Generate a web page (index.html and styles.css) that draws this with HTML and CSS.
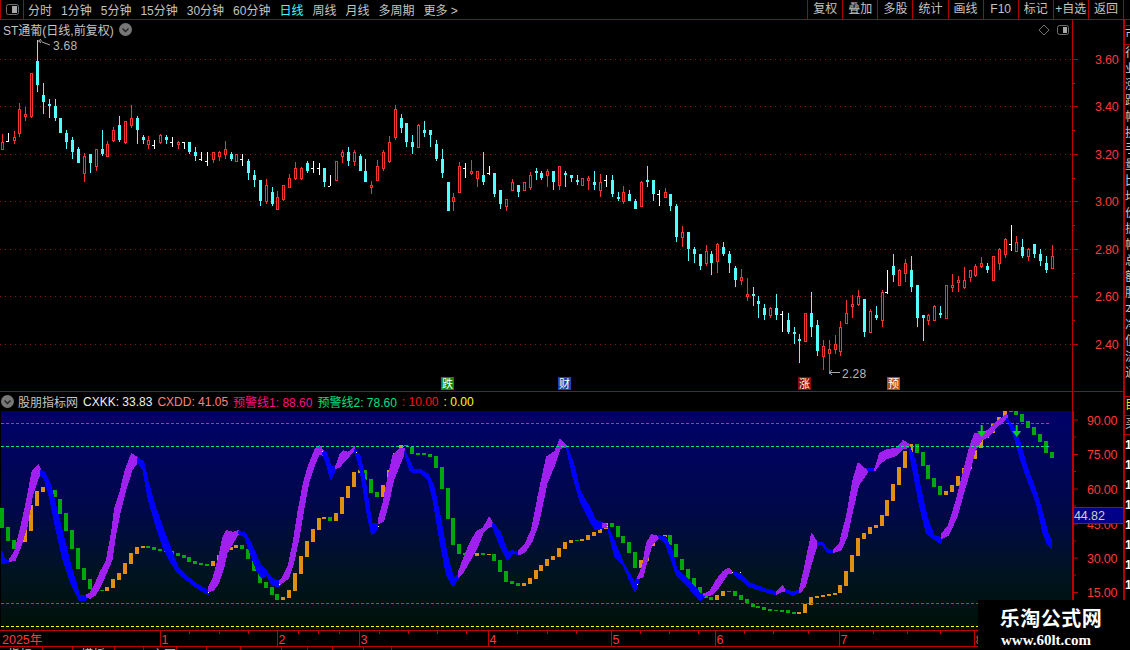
FILE: index.html
```html
<!DOCTYPE html><html>
<head>
<meta charset="utf-8">
<title>ST通葡 日线</title>
<link rel="stylesheet" href="styles.css">
</head>
<body>

<div class="toolbar">
	<div class="panel-toggle">
		<svg width="13" height="11" viewBox="0 0 13 11"><rect x=".5" y=".5" width="12" height="10" rx="2" class="toggle-frame"/><rect x="6" y="2" width="5" height="7" class="toggle-fill"/></svg>
	</div>
	<div class="periods">
		<span>分时</span><span>1分钟</span><span>5分钟</span><span>15分钟</span><span>30分钟</span><span>60分钟</span>
		<span class="active">日线</span><span>周线</span><span>月线</span><span>多周期</span><span>更多 &gt;</span>
	</div>
	<div class="tools">
		<span>复权</span><span>叠加</span><span>多股</span><span>统计</span><span>画线</span><span>F10</span><span>标记</span><span>+自选</span><span>返回</span>
	</div>
</div>

<div class="workspace">
	<div class="charts">
		<div class="pane-title">
			<span class="stock-name">ST通葡(日线,前复权)</span>
			<svg class="chevron" width="13" height="13" viewBox="0 0 13 13"><circle cx="6.5" cy="6.5" r="6.5"/><path d="M3.5 5.5 L6.5 8.5 L9.5 5.5"/></svg>
			<svg class="title-icons" width="28" height="12" viewBox="0 0 28 12">
				<path d="M2 1 L7 6 L2 11 L-3 6 Z" class="toggle-frame"/>
				<rect x="15.5" y="1.5" width="11" height="9" rx="2" class="toggle-frame"/><rect x="21" y="3" width="4" height="6" class="toggle-fill"/>
			</svg>
		</div>
		<svg id="price_chart" class="price-chart" width="1123" height="352" viewBox="0 39 1123 352"></svg>

		<div class="pane-title indicator-title">
			<svg class="chevron" width="13" height="13" viewBox="0 0 13 13"><circle cx="6.5" cy="6.5" r="6.5"/><path d="M3.5 5.5 L6.5 8.5 L9.5 5.5"/></svg>
			<span class="stock-name">股朋指标网</span>
			<span class="v-cxkk">CXKK: 33.83</span>
			<span class="v-cxdd">CXDD: 41.05</span>
			<span class="v-warn1">预警线1: 88.60</span>
			<span class="v-warn2">预警线2: 78.60</span>
			<span class="v-red">: 10.00</span>
			<span class="v-yellow">: 0.00</span>
		</div>
		<svg id="indicator_chart" class="indicator-chart" width="1123" height="219" viewBox="0 411 1123 219">
			<defs>
				<linearGradient id="bandGradient" x1="0" y1="0" x2="0" y2="1">
					<stop offset="0" stop-color="#000068"/>
					<stop offset=".45" stop-color="#00084a"/>
					<stop offset=".75" stop-color="#001420"/>
					<stop offset="1" stop-color="#001006"/>
				</linearGradient>
			</defs>
		</svg>
		<svg id="time_axis" class="time-axis" width="1123" height="15" viewBox="0 631 1123 15"></svg>
		<div class="sheet-tabs">
			<span class="w43">指标</span><span class="w30"></span><span class="w42">模板</span><span class="w29"></span><span class="w33">主图</span><span class="w30"></span><span class="w34"></span><span class="w41"></span><span class="w26"></span><span class="w25"></span><span class="w31"></span><span class="w28"></span>
		</div>
	</div>

	<div class="strip">
		<div class="strip-gap"></div>
		<div class="strip-row">市</div>
		<div class="strip-list">
			<div>行</div><div>业</div><div>涨</div><div>跌</div><div>幅</div><div>换</div><div>手</div><div>量</div><div>比</div><div>均</div><div>价</div>
			<div>振</div><div>幅</div><div>总</div><div>额</div><div>股</div><div>本</div><div>净</div><div>值</div><div>流</div><div>通</div>
		</div>
		<div class="strip-row yellow">目</div>
		<div class="strip-row">买</div>
		<div class="strip-list bright">
			<div>1</div><div>1</div><div>1</div><div>1</div><div>1</div><div>1</div><div>1</div><div>1</div><div>1</div><div>1</div><div>1</div>
		</div>
	</div>
</div>

<div class="watermark">
	<div class="wm-name">乐淘公式网</div>
	<div class="wm-url">www.60lt.com</div>
</div>

<script src="charts.js"></script>
</body></html>
```
FILE: styles.css
```css
* {box-sizing: border-box;}

body{
	position: relative;
	margin: 0px;
	width: 1130px;
	height: 650px;
	overflow: hidden;
	background-color: #000;
	color: #c4c4c4;
	font: 12px "Liberation Sans", "Noto Sans CJK SC", sans-serif;
}

/* top bar */
.toolbar {
	display: flex;
	align-items: center;
	height: 20px;
	border-bottom: 1px solid #b00000;
}
.panel-toggle {
	display: flex;
	align-items: center;
	justify-content: center;
	width: 24px;
	height: 19px;
	border-left: 1px solid #b00000;
	border-right: 1px solid #b00000;
}
.toggle-frame {fill: none; stroke: #707070;}
.toggle-fill  {fill: #a8a8a8;}
.periods {
	display: flex;
	gap: 9px;
	margin-left: 4px;
	white-space: nowrap;
}
.periods .active {color: #40ffff;}
.tools {
	display: grid;
	grid-template-columns: repeat(9, 35.1px);
	margin-left: auto;
	margin-right: 6px;
	height: 19px;
	border-right: 1px solid #b00000;
}
.tools span {
	border-left: 1px solid #b00000;
	text-align: center;
	line-height: 18px;
	white-space: nowrap;
}

/* main area */
.workspace {display: flex; height: 630px;}
.charts {width: 1123px; flex: none;}
.pane-title {
	display: flex;
	align-items: center;
	width: 1073px;
	height: 19px;
	padding-left: 3px;
	border-right: 1px solid #c00000;
	white-space: nowrap;
}
.chevron {margin-left: 5px;}
.chevron circle {fill: #777;}
.chevron path {fill: none; stroke: #222; stroke-width: 1.4;}
.title-icons {margin-left: auto; margin-right: 2px; overflow: visible;}

.price-chart {display: block; box-sizing: content-box; border-bottom: 1px solid #b00000;}

.indicator-title {gap: 5px; padding-left: 1px;}
.indicator-title .chevron {margin-left: 0;}
.indicator-title .stock-name {margin-left: -1px;}
.v-cxkk  {color: #f0f0f0;}
.v-cxdd  {color: #ff8080;}
.v-warn1 {color: #ff1080;}
.v-warn2 {color: #00e080;}
.v-red   {color: #ff1010;}
.v-yellow{color: #ffff00;}

.indicator-chart {display: block;}

.time-axis {
	display: block;
	box-sizing: content-box;
	border-top: 1px solid #c00000;
	border-bottom: 1px solid #c00000;
}

.sheet-tabs {display: flex; height: 3px; overflow: hidden; line-height: 16px; font-size: 12px;}
.sheet-tabs span {border-right: 1px solid #b00000; padding-left: 8px; height: 3px; white-space: nowrap; overflow: hidden;}
.w43 {width: 43px;} .w30 {width: 30px;} .w42 {width: 42px;} .w29 {width: 29px;}
.w33 {width: 33px;} .w34 {width: 34px;} .w41 {width: 41px;} .w26 {width: 26px;}
.w25 {width: 25px;} .w31 {width: 31px;} .w28 {width: 28px;}

/* chart svg bits */
.hair    {stroke: #8a1818; stroke-width: 1; stroke-dasharray: 1 4;}
.ax-line {stroke: #c00000; stroke-width: 1;}
.ax-bold {stroke: #c00000; stroke-width: 2;}
.ax-text {fill: #ff3838; font-size: 12.5px; letter-spacing: -.2px;}
.flag    {fill: #b8b8b8; font-size: 12px; letter-spacing: .3px;}
.flag-line {stroke: #a8a8a8; fill: none;}
.signal  {font-size: 11px; fill: #fff; text-anchor: middle;}
.wick    {shape-rendering: crispEdges;}
.body    {shape-rendering: crispEdges;}
.band    {shape-rendering: crispEdges; stroke-width: 1.6; stroke-linejoin: round;}
.dash    {stroke-width: 1; stroke-dasharray: 3 2; shape-rendering: crispEdges;}
.month   {fill: #ff3838; font-size: 12.5px;}
.last-box{fill: #000088;}
.last-text{fill: #d0d0d0; font-size: 12.5px; letter-spacing: -.1px;}

/* clipped column at the window edge */
.strip {
	flex: 1;
	height: 630px;
	border-left: 2px solid #b00000;
	overflow: hidden;
	color: #c8c8c8;
	white-space: nowrap;
	line-height: 16px;
}
.strip-gap {height: 6px; border-bottom: 1px solid #b00000;}
.strip-row {height: 19px; border-bottom: 1px solid #b00000;}
.strip-row.yellow {color: #e8e800;}
.strip-list {height: 352px; border-bottom: 1px solid #b00000;}
.strip-list.bright {height: auto; border: 0; color: #fff; font-weight: bold;}
.strip-list.bright div {height: 20px; line-height: 20px;}

.watermark {
	position: absolute;
	right: 0;
	bottom: 0;
	width: 152px;
	height: 50px;
	background-color: #000;
	color: #fff;
	font-family: "Liberation Serif", "Noto Sans CJK SC", serif;
	font-weight: bold;
	text-align: center;
}
.wm-name {margin-top: 8px; margin-right: 6px; font-size: 20px; line-height: 22px; letter-spacing: .5px;}
.wm-url  {margin-top: 2px; margin-right: 16px; font-size: 15px; line-height: 16px;}
```
FILE: charts.js
```js
const NS = 'http://www.w3.org/2000/svg'
const price = document.querySelector('#price_chart')
const indi = document.querySelector('#indicator_chart')
const timeAxis = document.querySelector('#time_axis')

function add(svg, tag, attrs, text) {
	const el = document.createElementNS(NS, tag)
	for (const k in attrs) el.setAttribute(k, attrs[k])
	if (text != null) el.textContent = text
	svg.appendChild(el)
	return el
}
const slotX = i => Math.floor(2.3 + i * 5.865)

// candles: type high top bottom low, measured at 3x, each block has its own y origin
const candleBlocks = [
	[30, `r 312 336 360 360 w 308 332 335 335 r 304 322 332 342 r 220 237 311 320 r 232 253 260 272 r 130 130 261 264
		c 30 93 165 186 c 160 195 215 252 c 208 222 228 264 c 208 228 264 272 c 264 264 308 308 c 301 309 335 357
		c 322 330 366 387 c 352 357 398 398 r 370 378 431 456 c 372 372 399 429 r 358 358 410 423 c 300 357 372 378
		r 334 342 380 381 r 290 300 332 335 c 258 285 330 336 r 273 274 339 341 r 226 264 287 294 c 258 264 299 342
		c 316 321 330 342 r 318 330 345 357 w 330 345 345 357 r 313 316 339 342 c 316 321 330 342 w 321 336 336 351
		r 334 337 345 357 w 336 336 336 357 c 336 336 366 372 c 351 366 378 393 w 366 388 388 393 w 366 393 393 408
		r 366 367 389 399 r 364 367 381 393 r 334 358 374 387 c 366 372 387 393 r 372 373 395 396 w 372 387 387 408
		c 387 393 429 450 c 420 435 450 471`],
	[100, `c 240 240 303 318 r 237 255 306 312 c 262 276 312 318 r 273 291 330 330 r 255 255 300 303 r 222 234 264 264
		r 186 204 237 240 r 201 204 237 240 c 183 189 213 219 w 183 204 204 219 w 189 204 204 225 c 204 204 246 261
		w 225 258 258 258 r 183 183 243 243 r 150 156 171 189 c 141 156 183 198 r 150 156 186 198 c 162 168 213 213
		c 177 213 246 246 r 243 255 264 282 r 180 198 243 243 r 150 156 207 213 r 108 126 186 189 r 15 27 114 120
		c 42 54 84 99 c 69 69 126 141 c 105 126 141 162 r 72 75 144 144 c 63 90 99 111 c 90 90 105 141 c 120 132 177 183
		c 147 177 219 234 c 246 246 333 333 r 279 291 306 333 r 186 198 279 279 w 189 204 204 234 r 180 213 222 225
		r 213 213 237 261 c 156 225 246 255 w 198 219 219 225 c 219 219 282 291 c 270 270 312 327 r 297 297 321 333
		r 237 246 273 273 c 255 255 276 291`],
	[150, `r 97 97 123 123 r 66 75 114 120 c 54 63 69 90 c 63 69 84 90 r 57 63 78 111 c 63 63 96 120 r 48 48 108 120
		c 63 69 75 111 c 75 75 84 96 c 75 90 96 105 r 84 84 108 108 r 78 84 93 120 c 63 96 105 120 r 72 96 123 141
		w 75 90 90 111 c 75 90 132 141 c 126 141 147 153 r 108 126 156 162 c 120 132 153 153 c 147 153 177 177
		r 93 96 171 171 c 48 90 96 111 c 90 90 132 153 w 120 132 132 168 r 114 126 144 144 c 132 132 168 183
		c 162 168 261 276 r 228 246 264 291 c 246 246 297 333 c 291 297 312 339 c 312 312 348 360 r 285 303 342 348
		c 303 312 339 375 r 279 282 336 369 c 276 291 312 318 c 303 312 339 369 c 348 354 390 411 r 357 381 393 405
		r 384 432 441 453 c 411 432 438 468 c 438 453 462 504 c 462 474 495 510 r 471 474 498 504 c 432 474 495 510`],
	[220, `w 273 282 282 336 c 279 300 336 342 c 321 336 342 372 c 342 357 363 429 r 279 280 365 365 c 216 279 321 351
		c 300 315 393 408 r 360 378 411 450 r 360 387 402 462 r 345 372 390 402 r 303 321 396 408 r 240 279 312 312
		r 225 252 261 294 r 210 228 255 258 c 237 237 336 351 r 267 273 339 339 c 258 285 294 300 r 210 216 303 321
		w 150 216 216 222 c 102 138 165 186 r 147 150 198 198 r 117 129 162 186 c 108 150 201 216 c 195 195 294 321
		c 285 285 294 363 r 282 285 303 315 r 255 258 303 303 c 258 279 285 294 r 195 195 297 297 r 162 195 204 216
		r 168 180 189 216 r 141 180 204 207 r 150 150 174 186 r 132 138 168 171 r 111 129 141 144 c 129 138 150 159
		r 108 108 183 183 r 84 87 132 150 r 54 57 105 114 w 15 72 72 93 r 48 66 96 96 c 57 81 108 114 r 84 87 111 123
		c 72 72 102 114 c 87 102 123 138 c 108 129 150 159 r 75 108 147 147`],
]
const COL = {r: '#ff3232', c: '#54ffff', w: '#ffffff'}

// grid of the price pane
const priceLevels = [[59.5, '3.60'], [106.5, '3.40'], [154.5, '3.20'], [201.5, '3.00'], [249.5, '2.80'], [296.5, '2.60'], [344.5, '2.40']]
priceLevels.forEach(([y, label]) => {
	add(price, 'line', {x1: 0, x2: 1072, y1: y, y2: y, class: 'hair'})
	add(price, 'line', {x1: 1072, x2: 1078, y1: y, y2: y, class: 'ax-line'})
	add(price, 'text', {x: 1095, y: y + 4.5, class: 'ax-text'}, label)
	if (y < 344) add(price, 'line', {x1: 1072, x2: 1075, y1: y + 24, y2: y + 24, class: 'ax-line'})
})
add(price, 'line', {x1: 1072.5, x2: 1072.5, y1: 39, y2: 391, class: 'ax-line'})

let idx = 0
candleBlocks.forEach(([oy, text]) => {
	const t = text.trim().split(/\s+/)
	for (let n = 0; n < t.length; n += 5) {
		const [hi, top, bot, lo] = t.slice(n + 1, n + 5).map(v => Math.round(oy + v / 3))
		const x = slotX(idx++), col = COL[t[n]]
		add(price, 'rect', {x, y: hi, width: 1, height: Math.max(lo - hi, 1), fill: col, class: 'wick'})
		if (t[n] == 'w') {
			add(price, 'rect', {x: x - 2, y: top, width: 2, height: 1, fill: col, class: 'wick'})
		} else if (t[n] == 'r') {
			add(price, 'rect', {x: x - .5, y: top + .5, width: 2, height: Math.max(bot - top - 1, 1), fill: '#000', stroke: col, class: 'body'})
		} else {
			add(price, 'rect', {x: x - 1, y: top, width: 3, height: Math.max(bot - top, 1), fill: col, class: 'body'})
		}
	}
})

// high / low flags
add(price, 'path', {d: 'M38.5 41 H42 M38.5 41 L41 39 M38.5 41 L41 43 M42 42 L46 43.5 L50 45', class: 'flag-line'})
add(price, 'text', {x: 53, y: 50, class: 'flag'}, '3.68')
add(price, 'path', {d: 'M829 372.5 H840 M829 372.5 L832 370 M829 372.5 L832 375', class: 'flag-line'})
add(price, 'text', {x: 842, y: 378, class: 'flag'}, '2.28')

// little signal tags above the indicator
;[[441, '跌', '#0a8a0a'], [558, '财', '#1048b0'], [798, '涨', '#8c0808'], [887, '预', '#b04a10']].forEach(([x, label, bg]) => {
	add(price, 'rect', {x, y: 377, width: 13, height: 13, fill: bg})
	add(price, 'text', {x: x + 6.5, y: 388, class: 'signal'}, label)
})

// indicator pane
add(indi, 'rect', {x: 1, y: 411, width: 1071, height: 219, fill: 'url(#bandGradient)'})

// bars: type top bottom. first block at 3x from y=420, second in plain page pixels
const BAR = {g: '#00a80c', o: '#e09010'}
const barsZoomed = `g 264 323 g 321 363 g 360 387 o 360 387 o 331 366 o 255 333 o 213 258 o 201 216 g 200 212 g 210 232 g 237 281
	g 279 333 g 330 387 g 384 447 g 444 480 g 477 507 g 510 513 g 511 513 o 501 513 o 477 504 o 459 480 o 429 462 o 399 432 o 381 402
	o 378 384 g 378 384 g 381 390 g 387 393 g 390 396 g 393 402 g 399 408 g 405 414 g 411 426 g 423 432 g 429 435 g 432 438 o 423 438
	o 405 435 o 393 408 o 381 390 o 375 384 g 375 387 g 387 417 g 417 453 g 450 489 g 486 504 g 501 525 g 522 540 o 531 540 o 510 534
	o 459 513 o 408 462 o 363 411 o 327 366 o 294 330 o 291 297 g 291 303 o 279 303 o 231 282 o 198 234 o 156 201 o 150 159 g 150 180
	g 177 219 g 216 231 o 195 231 o 150 198 o 99 153 o 75 102 g 75 78 g 81 102 g 99 105 g 100 106 g 102 111 g 108 144 g 141 207 g 204 297
	g 294 375 g 372 402 g 399 405 o 402 408 o 399 408 g 399 405 o 402 405 g 402 423 g 420 456 g 453 486 g 483 492 g 489 498 o 489 498
	o 474 492 o 450 477 o 435 453 o 417 438 o 408 420 o 384 411 o 366 387 o 360 369 g 360 363 o 357 363 o 345 360 o 336 348 o 327 339
	o 309 327 g 309 321 g 318 351 g 348 369 g 366 399 g 396 444 o 420 444 o 396 423 o 363 378 o 351 357 o 345 351 g 345 375 g 372 411
	g 417 450 g 447 477 g 474 501 g 501 522 g 528 534 g 531 540 o 525 540 o 513 528 g 513 516 g 513 528 g 525 540 g 537 549 g 552 561
	g 558 564 g 561 570 g 567 573`
const barsPlain = `g 610 611 g 610 612 g 610 613 g 612 614 o 612 614 o 604 613 o 597 605 o 596 598 o 595 597 o 594 596 o 593 595 o 585 593 o 571 586
	o 555 572 o 538 556 o 533 539 o 527 534 o 525 528 o 515 526 o 500 516 o 484 501 o 467 485 o 451 468 o 444 452 g 444 453 g 452 466
	g 465 479 g 478 487 g 486 495 o 491 495 o 485 492 o 476 486 o 468 477 o 458 469 o 450 459 o 437 448 o 432 438 o 424 433 o 417 425
	o 411 418 g 411 412 g 411 415 g 414 422 g 421 428 g 427 435 g 434 442 g 441 453 g 452 458`
let bi = 0
function drawBars(text, conv) {
	const t = text.trim().split(/\s+/)
	for (let n = 0; n < t.length; n += 3) {
		const top = conv(+t[n + 1]), bot = conv(+t[n + 2])
		add(indi, 'rect', {x: slotX(bi++) - 2, y: top, width: 4, height: Math.max(bot - top, 1), fill: BAR[t[n]], class: 'body'})
	}
}
drawBars(barsZoomed, v => Math.round(420 + v / 3))
drawBars(barsPlain, v => v)

// ribbon: [colour, x top bottom ...], 3x coords; blocks differ by their crop origin
const PUR = '#a020f0', BLU = '#0000ff'
const ribbons = [
	{xo: 0, yo: 0, segs: [
		[BLU, '5 395 429 15 420 429 30 422 424'],
		[PUR, '28 420 424 45 395 420 60 335 385 80 245 320 97 155 225 115 135 170 123 152 165'],
		[BLU, '122 152 165 135 160 180 150 190 235 170 270 335 190 350 420 210 430 480 225 480 515 238 525 540 255 530 540 260 525 530'],
		[PUR, '260 525 530 270 520 534 285 495 525 300 460 500 320 420 455 335 340 420 345 265 350 360 220 275 375 155 215 395 102 150 413 115 125'],
		[BLU, '413 115 125 430 125 150 445 190 235 465 260 305 490 330 380 515 395 430 535 445 460 555 465 475 580 485 495 610 505 515 625 512 522'],
		[PUR, '625 505 515 640 475 510 655 420 490 670 350 445 680 333 400 700 338 365 715 333 340'],
		[BLU, '715 335 340 735 340 350 750 365 395 770 410 450 785 440 473 800 455 465 815 475 495 838 485 500'],
		[PUR, '838 485 495 850 470 485 865 440 475 880 370 430 895 275 360 910 195 270 925 140 190 945 90 130 958 78 100 968 90 105'],
		[BLU, '968 95 100 978 97 125 993 140 178 1007 142 145'],
		[PUR, '1007 142 144 1020 105 140 1030 93 125 1045 98 110 1063 82 90'],
		[BLU, '1065 88 95 1078 105 135 1090 150 200 1100 215 270 1115 310 342 1130 310 330'],
		[PUR, '1135 300 310 1150 250 303 1165 170 250 1180 105 180 1200 85 130 1212 85 100'],
		[BLU, '1215 95 100 1230 125 150 1240 150 158 1260 148 155'],
	]},
	{xo: 1260, yo: 0, segs: [
		[BLU, '0 148 155 25 165 180 40 195 240 60 290 360 80 400 465 100 475 498 115 465 472'],
		[PUR, '115 460 472 130 420 455 150 370 420 170 335 385 190 325 335 208 292 320 218 312 318'],
		[BLU, '218 310 318 240 335 375 262 395 420 280 393 400 295 398 402'],
		[PUR, '295 395 404 315 375 395 335 330 365 355 230 310 380 112 190 405 95 130 420 60 85 437 75 80'],
		[BLU, '440 80 85 460 130 170 480 215 240 510 265 300 525 300 328 548 310 325'],
		[PUR, '548 312 322 556 310 322 562 318 322'],
		[BLU, '565 325 330 585 370 410 610 430 435 630 465 480 645 490 515 654 470 490'],
		[PUR, '654 470 475 668 440 470 680 370 425 695 345 375 715 350 355'],
		[BLU, '715 348 352 735 350 365 755 390 420 770 450 465 800 475 495 840 520 540 852 522 530'],
		[PUR, '852 522 526 870 515 527 890 480 510 910 455 480 925 445 458 937 455 458'],
		[BLU, '937 455 458 965 465 480 990 490 500 1030 505 513 1070 518 524'],
		[PUR, '1070 515 522 1087 498 512 1097 512 515'],
		[BLU, '1097 512 515 1120 515 525 1140 512 516'],
		[PUR, '1140 505 516 1155 440 500 1175 342 425 1192 370 372'],
		[BLU, '1192 370 375 1205 367 372 1225 390 398 1242 392 396'],
		[PUR, '1242 390 396 1260 370 390'],
	]},
	{xo: 2340, yo: -150, segs: [
		[PUR, '180 520 540 185 495 535 200 440 500 220 330 410 235 280 345 250 295 325 262 300 305'],
		[BLU, '262 296 300 285 298 300'],
		[PUR, '285 298 300 300 250 280 320 240 265 350 235 255 370 212 235 388 225 232'],
		[BLU, '388 230 240 405 270 330 420 350 410 440 440 490 460 495 505 482 505 520'],
		[PUR, '486 490 505 505 470 495 530 390 440 550 310 370 570 230 300 585 190 240 605 195 210 625 180 200 650 155 170 680 135 145'],
		[BLU, '680 145 150 700 170 190 720 220 260 740 290 320 770 370 400 790 440 490 803 490 522 814 512 534'],
	]},
]
ribbons.forEach(({xo, yo, segs}) => segs.forEach(([col, s]) => {
	const v = s.split(' ').map(Number), up = [], down = []
	for (let n = 0; n < v.length; n += 3) {
		const x = ((xo + v[n]) / 3).toFixed(1)
		up.push(x + ',' + (420 + (yo + v[n + 1]) / 3).toFixed(1))
		down.unshift(x + ',' + (420 + (yo + v[n + 2]) / 3).toFixed(1))
	}
	add(indi, 'polygon', {points: up.concat(down).join(' '), fill: col, stroke: col, class: 'band'})
}))

// tiny white marks where the ribbon turns
;[[208, 592], [279, 584], [378, 526], [322, 451], [356, 452], [637, 584], [732, 572], [607, 526], [740, 572]].forEach(([x, y]) => {
	add(indi, 'rect', {x, y, width: 1, height: 1, fill: '#fff', class: 'body'})
})

// level lines
;[[423, '#ff10a0'], [446, '#00e878'], [603, '#ff2020'], [626, '#ffff00']].forEach(([y, col]) => {
	add(indi, 'line', {x1: 1, x2: y < 500 ? 1051 : 1072, y1: y + .5, y2: y + .5, stroke: col, class: 'dash'})
})

// sell arrows
;[981.7, 1016.7].forEach(x => {
	add(indi, 'polygon', {points: `${x - 1},425 ${x + 1},425 ${x + 1},431 ${x + 4.5},431 ${x},437 ${x - 4.5},431 ${x - 1},431`, fill: '#00d020'})
})

// indicator axis
;[[420, '90.00'], [454.5, '75.00'], [489, '60.00'], [524, '45.00'], [558, '30.00'], [592.5, '15.00']].forEach(([y, label]) => {
	add(indi, 'line', {x1: 1073, x2: 1078, y1: y, y2: y, class: 'ax-line'})
	add(indi, 'text', {x: 1087, y: y + 4.5, class: 'ax-text'}, label)
	add(indi, 'line', {x1: 1073, x2: 1076, y1: y + 17, y2: y + 17, class: 'ax-line'})
})
add(indi, 'line', {x1: 1073, x2: 1073, y1: 411, y2: 630, class: 'ax-bold'})
add(indi, 'rect', {x: 1074, y: 507, width: 49, height: 16, class: 'last-box'})
add(indi, 'line', {x1: 1074, x2: 1123, y1: 507.5, y2: 507.5, class: 'ax-line'})
add(indi, 'line', {x1: 1074, x2: 1123, y1: 523.5, y2: 523.5, class: 'ax-line'})
add(indi, 'text', {x: 1074, y: 520, class: 'last-text'}, '44.82')

// time axis
;[[160, '1'], [277, '2'], [359, '3'], [488, '4'], [611, '5'], [715, '6'], [839, '7'], [974, '8']].forEach(([x, m]) => {
	add(timeAxis, 'line', {x1: x + .5, x2: x + .5, y1: 631, y2: 646, class: 'ax-line'})
	add(timeAxis, 'text', {x: x + 1.5, y: 644, class: 'month'}, m)
})
add(timeAxis, 'text', {x: 2, y: 644, class: 'month'}, '2025年')
for (const x of [189, 219, 248, 298, 318, 339, 379, 408, 437, 466, 517, 547, 576, 640, 669, 698, 744, 773, 808, 873, 907, 940]) {
	add(timeAxis, 'line', {x1: x + .5, x2: x + .5, y1: 631, y2: 634, class: 'ax-line'})
}
add(timeAxis, 'line', {x1: 1072.5, x2: 1072.5, y1: 631, y2: 646, class: 'ax-line'})
```
